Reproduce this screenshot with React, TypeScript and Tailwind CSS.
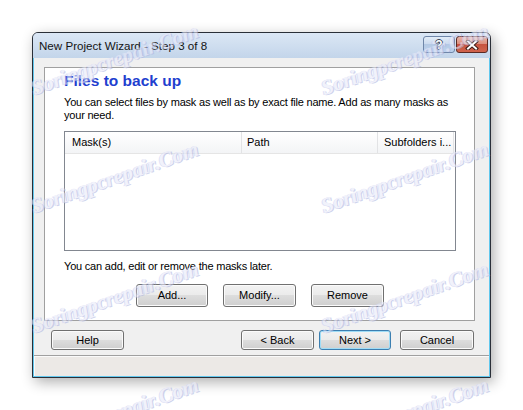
import React from "react";

const font = { fontFamily: '"Liberation Sans", Arial, sans-serif' };

function Btn({ label, w, h, def }: { label: string; w: string; h: string; def?: boolean }) {
  return (
    <div
      className={`${w} ${h} flex items-center justify-center rounded-[3px] border text-[11px] text-black ${
        def
          ? "border-[#3c7fb1] bg-[linear-gradient(to_bottom,#f2f2f2_0%,#ebebeb_50%,#dddddd_50%,#cfcfcf_100%)] shadow-[inset_0_0_0_1px_#9fdcf6]"
          : "border-[#707070] bg-[linear-gradient(to_bottom,#f2f2f2_0%,#ebebeb_50%,#dddddd_50%,#cfcfcf_100%)] shadow-[inset_0_0_0_1px_#fbfbfb]"
      }`}
    >
      {label}
    </div>
  );
}

const marks: { c: string }[] = [
  { c: "left-[115px] top-[60px]" },
  { c: "left-[405px] top-[60px]" },
  { c: "left-[115px] top-[178px]" },
  { c: "left-[405px] top-[178px]" },
  { c: "left-[115px] top-[298px]" },
  { c: "left-[405px] top-[298px]" },
  { c: "left-[115px] top-[414px]" },
  { c: "left-[405px] top-[414px]" },
];

export default function App() {
  return (
    <div className="relative w-[523px] h-[410px] bg-white overflow-hidden" style={font}>
      <div className="pt-[32px] pl-[32px]">
        <div className="w-[459px] h-[346px] flex flex-col border border-[#2a2f38] rounded-t-[6px] bg-[#c4d6ec] shadow-[3px_4px_14px_rgba(0,0,0,0.32)]">
          {/* title bar */}
          <div className="h-[25px] shrink-0 flex items-start justify-between rounded-t-[5px] bg-[linear-gradient(to_bottom,#dbe7f5,#c3d5ea)] pl-[6px] pr-[2px]">
            <div className="pt-[5px] text-[11.6px] leading-[15px] text-[#141414]">New Project Wizard - Step 3 of 8</div>
            <div className="flex gap-[1px] pt-[3px]">
              <div className="w-[32px] h-[17px] rounded-[3px] border border-[#6f86a8] bg-[linear-gradient(to_bottom,#e3ecf7_0%,#c9d9ee_50%,#b4c9e4_50%,#bcd2ec_100%)] flex items-center justify-center">
                <span className="text-[12px] leading-[12px] font-bold text-white [text-shadow:1px_0_#3a4658,-1px_0_#3a4658,0_1px_#3a4658,0_-1px_#3a4658]">?</span>
              </div>
              <div className="w-[32px] h-[17px] rounded-[3px] border border-[#5a2a24] bg-[linear-gradient(to_bottom,#e9b5a8_0%,#dc8f7e_45%,#c75440_50%,#d0644d_100%)] flex items-center justify-center">
                <svg width="14" height="10" viewBox="0 0 14 10">
                  <path d="M3 1.5 L11 8.5 M11 1.5 L3 8.5" stroke="#3b1a16" strokeWidth="4" strokeLinecap="square" />
                  <path d="M3 1.5 L11 8.5 M11 1.5 L3 8.5" stroke="#ffffff" strokeWidth="2" strokeLinecap="square" />
                </svg>
              </div>
            </div>
          </div>
          {/* client */}
          <div className="flex-1 flex flex-col border-x border-b border-[#62c8ee] bg-[#f0f0f0]">
            <div className="mt-[9px] ml-[10px] mr-[14px] h-[254px] border border-[#a0a0a0] bg-white flex flex-col pl-[19px] pr-[18px] pt-[3px]">
              <div className="text-[15.5px] leading-[20px] font-bold text-[#1f3fcf]">Files to back up</div>
              <div className="mt-[5px] text-[11px] leading-[13px] tracking-[-0.2px] whitespace-nowrap text-black">
                You can select files by mask as well as by exact file name. Add as many masks as
                <br />
                your need.
              </div>
              <div className="mt-[9px] h-[120px] border border-[#828790] flex flex-col">
                <div className="h-[22px] flex border-b border-[#e5e5e5] bg-[linear-gradient(to_bottom,#ffffff,#f3f4f6)] text-[11px] text-black">
                  <div className="w-[177px] border-r border-[#e2e3e5] pl-[7px] flex items-center">Mask(s)</div>
                  <div className="w-[136px] border-r border-[#e2e3e5] pl-[5px] flex items-center">Path</div>
                  <div className="w-[76px] border-r border-[#e2e3e5] pl-[6px] flex items-center whitespace-nowrap">Subfolders i...</div>
                </div>
              </div>
              <div className="mt-[9px] text-[11px] leading-[13px] tracking-[-0.2px] text-black">You can add, edit or remove the masks later.</div>
              <div className="mt-[11px] flex justify-center gap-[15px]">
                <Btn label="Add..." w="w-[72px]" h="h-[23px]" />
                <Btn label="Modify..." w="w-[73px]" h="h-[23px]" />
                <Btn label="Remove" w="w-[73px]" h="h-[23px]" />
              </div>
            </div>
            <div className="mt-[9px] h-[20px] flex pl-[17px] pr-[15px]">
              <Btn label="Help" w="w-[73px]" h="h-[20px]" />
              <div className="flex-1" />
              <div className="flex">
                <Btn label="< Back" w="w-[73px]" h="h-[20px]" />
                <div className="ml-[5px]">
                  <Btn label="Next >" w="w-[72px]" h="h-[20px]" def />
                </div>
                <div className="ml-[9px]">
                  <Btn label="Cancel" w="w-[74px]" h="h-[20px]" />
                </div>
              </div>
            </div>
            <div className="mt-[5px] flex-1 border-t border-[#a0a0a0] bg-[#ece9e6] shadow-[inset_1px_1px_0_#fafafa]" />
          </div>
        </div>
      </div>
      {marks.map((m, i) => (
        <div
          key={i}
          className={`pointer-events-none absolute ${m.c} -translate-x-1/2 -translate-y-1/2 -rotate-[19.5deg] whitespace-nowrap text-[21px] font-bold italic text-[#e8eaf9] opacity-60 [text-shadow:1px_1px_0_#aeb5e2,-1px_0_0_#c8cdf0]`}
          style={{ fontFamily: '"Liberation Serif", "Times New Roman", serif' }}
        >
          Soringpcrepair.Com
        </div>
      ))}
    </div>
  );
}
